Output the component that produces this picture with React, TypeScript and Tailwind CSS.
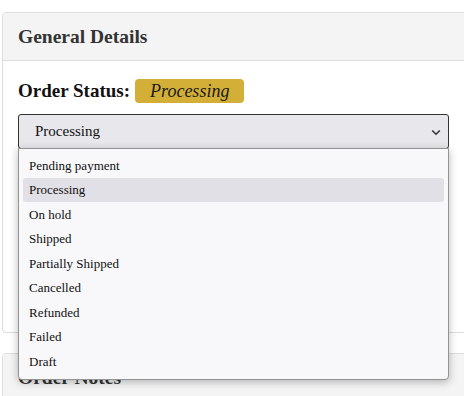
import React from "react";

const options = [
  "Pending payment",
  "Processing",
  "On hold",
  "Shipped",
  "Partially Shipped",
  "Cancelled",
  "Refunded",
  "Failed",
  "Draft",
];

export default function App() {
  return (
    <div className="w-[464px] h-[396px] overflow-hidden bg-white font-['Liberation_Serif',serif]">
      <div className="pt-[12px] pl-[2px]">
        <div className="w-[466px] h-[321px] border border-[#dddddd] rounded-[4px]">
          <div className="h-[48px] bg-[#f4f4f4] border-b border-[#dddddd] rounded-t-[4px] flex items-center px-[15px]">
            <h2 className="text-[19.5px] font-bold text-[#333333] leading-normal">General Details</h2>
          </div>
          <div className="px-[15px] pt-[18px] relative">
            <div className="flex items-center h-[24px]">
              <span className="text-[19px] font-bold text-[#111111] leading-normal">Order Status:</span>
              <span className="ml-[5px] h-[23.5px] flex items-center px-[15px] rounded-[4px] bg-[#d4af37] text-[18px] italic text-[#1a1a1a] leading-none">
                Processing
              </span>
            </div>
            <div className="relative mt-[11px] w-[431px]">
              <div className="h-[35px] border border-[#333333] rounded-[3px] bg-[#e8e7ec] flex items-center justify-between pl-[16px] pr-[7px]">
                <span className="text-[15px] text-[#111111]">Processing</span>
                <svg width="10" height="7" viewBox="0 0 10 7" className="mt-[1px]">
                  <path d="M1.2 1.5 L5 5.2 L8.8 1.5" fill="none" stroke="#333333" strokeWidth="1.6" />
                </svg>
              </div>
              <div className="absolute z-10 left-0 top-[34px] w-[431px] h-[232px] border border-[#939393] rounded-b-[4px] bg-[#f8f8fa] shadow-[0_2px_8px_rgba(0,0,0,0.28)] px-[4px] pt-[4px]">
                {options.map((o) => (
                  <div
                    key={o}
                    className={
                      o === "Processing"
                        ? "h-[24.5px] flex items-center px-[6px] rounded-[3px] bg-[#e1e0e6] text-[13px] text-[#111111]"
                        : "h-[24.5px] flex items-center px-[6px] text-[13px] text-[#111111]"
                    }
                  >
                    {o}
                  </div>
                ))}
              </div>
            </div>
          </div>
        </div>
        <div className="mt-[20px] w-[466px] h-[100px] border border-[#dddddd] rounded-[4px]">
          <div className="h-[48px] bg-[#f4f4f4] border-b border-[#dddddd] rounded-t-[4px] flex items-center px-[15px]">
            <h2 className="text-[19.5px] font-bold text-[#333333] leading-normal">Order Notes</h2>
          </div>
        </div>
      </div>
    </div>
  );
}
